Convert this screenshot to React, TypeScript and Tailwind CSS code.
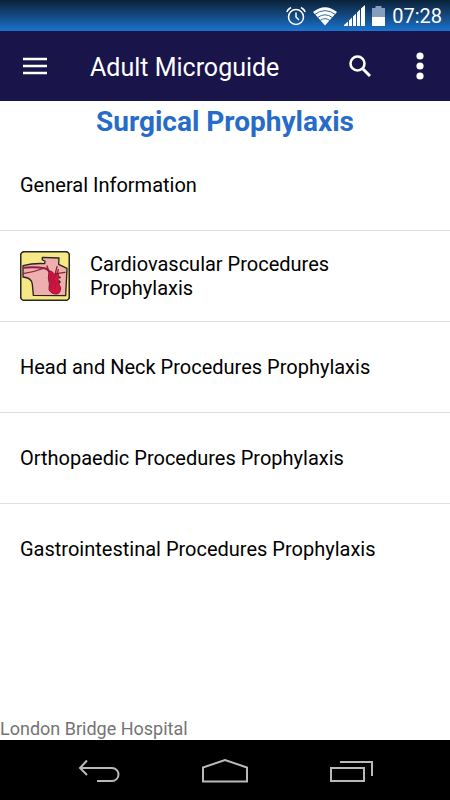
import type { ReactNode } from "react";

interface Procedure {
  id: string;
  title: string;
  icon?: ReactNode;
}

function HeartIcon() {
  return (
    <svg viewBox="30 28 150 150" className="h-[50px] w-[50px] shrink-0" aria-hidden="true">
      <rect x="32" y="30" width="146" height="146" rx="11" fill="#f6e884" stroke="#2b2723" strokeWidth="5" />
      <path
        d="M39 72 Q70 64 104 66 L105 58 L97 55 L97 47 L147 49 L146 68 L171 80 L167 162 L70 161 L67 128 Q65 108 39 106 Z"
        fill="#eeb0ac"
        stroke="#2b2424"
        strokeWidth="4"
        strokeLinejoin="round"
      />
      <path d="M39 78 Q76 74 104 80 Q115 83 123 97" fill="none" stroke="#8f1f45" strokeWidth="6" />
      <path d="M39 96 Q72 91 104 79" fill="none" stroke="#8f1f45" strokeWidth="4" />
      <path
        d="M111 73 L116 88 M141 75 L136 95 M165 92 L144 95 M145 84 L141 96"
        fill="none"
        stroke="#8f1f3d"
        strokeWidth="4"
        strokeLinecap="round"
      />
      <path
        d="M117 88 Q126 87 133 97 L144 95 L147 106 L143 112 L150 119 L147 128 L152 138 Q151 155 141 157 Q124 158 117 144 L118 125 L115 110 Z"
        fill="#d4133f"
        stroke="#8c1538"
        strokeWidth="3"
        strokeLinejoin="round"
      />
      <path d="M126 94 L122 111 L128 126 L120 140 M137 99 L130 113 L139 124 L134 142" fill="none" stroke="#991a43" strokeWidth="3" />
      <path d="M147 107 L152 108 M147 119 L151 123" stroke="#37242a" strokeWidth="5" />
    </svg>
  );
}

const procedures: Procedure[] = [
  { id: "general", title: "General Information" },
  {
    id: "cardiovascular",
    title: "Cardiovascular Procedures Prophylaxis",
    icon: <HeartIcon />,
  },
  { id: "head-neck", title: "Head and Neck Procedures Prophylaxis" },
  { id: "orthopaedic", title: "Orthopaedic Procedures Prophylaxis" },
  { id: "gastrointestinal", title: "Gastrointestinal Procedures Prophylaxis" },
];

function StatusBar() {
  return (
    <div className="flex h-[31px] items-center justify-end gap-[7px] bg-linear-to-b from-[#0b2239] to-[#1a73cf] pr-2 text-white">
      <svg viewBox="0 0 20 20" className="h-5 w-5" fill="none" stroke="currentColor" strokeWidth="1.5" aria-hidden="true">
        <circle cx="10" cy="11" r="7.5" />
        <path d="M10 6.5 V11 L13 14" />
        <path d="M0.8 6 Q2 3 5 1.5 M19.2 6 Q18 3 15 1.5" />
      </svg>
      <svg viewBox="0 0 24 20" className="h-5 w-6" aria-hidden="true">
        <path d="M0 6 Q12 -3.5 24 6 L12 19.5 Z" fill="currentColor" />
        <path
          d="M1.5 8.6 Q12 0.6 22.5 8.6 M4.5 11.6 Q12 6 19.5 11.6 M7.2 14.4 Q12 11 16.8 14.4"
          fill="none"
          stroke="#165899"
          strokeWidth="0.9"
        />
      </svg>
      <svg viewBox="0 0 21 21" className="h-[21px] w-[21px]" fill="currentColor" aria-hidden="true">
        <path d="M0 21 V20 L4 16.5 V21 Z M5 21 V15.5 L8 12.5 V21 Z M9 21 V11.5 L12 8.5 V21 Z M13 21 V7.5 L16 4.5 V21 Z M17 21 V3.5 L21 0 V21 Z" />
      </svg>
      <svg viewBox="0 0 13 20" className="h-5 w-[13px]" aria-hidden="true">
        <path d="M3.5 0 H9.5 V2 H13 V11 H0 V2 H3.5 Z" fill="#839fbd" />
        <path d="M0 11 H13 V20 H0 Z" fill="currentColor" />
      </svg>
      <time className="text-xl leading-6">07:28</time>
    </div>
  );
}

function AppBar() {
  return (
    <header className="flex h-[70px] items-center bg-[#19144a] pr-2.5 pl-5 text-white">
      <button type="button" aria-label="Open menu" className="flex h-10 w-[30px] items-center justify-center">
        <svg viewBox="0 0 24 18" className="h-[18px] w-6" stroke="currentColor" strokeWidth="2.4" aria-hidden="true">
          <path d="M0 2 H24 M0 9 H24 M0 16 H24" />
        </svg>
      </button>
      <h1 className="ml-10 flex-1 pt-1 text-[25px] leading-8">Adult Microguide</h1>
      <button type="button" aria-label="Search" className="flex h-10 w-10 items-center justify-center">
        <svg viewBox="0 0 24 24" className="h-6 w-6" fill="none" stroke="currentColor" aria-hidden="true">
          <circle cx="9.5" cy="9.5" r="7" strokeWidth="2.6" />
          <path d="M14.5 14.5 L22 22" strokeWidth="3" />
        </svg>
      </button>
      <button type="button" aria-label="More options" className="ml-5 flex h-10 w-10 items-center justify-center">
        <svg viewBox="0 0 8 28" className="h-7 w-2" fill="currentColor" aria-hidden="true">
          <circle cx="4" cy="4" r="3.6" />
          <circle cx="4" cy="14" r="3.6" />
          <circle cx="4" cy="24" r="3.6" />
        </svg>
      </button>
    </header>
  );
}

function NavigationBar() {
  return (
    <nav aria-label="System" className="flex h-[60px] items-center justify-around bg-black px-9 pt-0.5 text-[#b9b9b9]">
      <button type="button" aria-label="Back" className="flex h-10 w-12 items-center justify-center">
        <svg viewBox="0 0 42 24" className="h-6 w-[42px]" fill="none" stroke="currentColor" strokeWidth="2" aria-hidden="true">
          <path d="M9 1.5 L2 9 L9 16 M2 9 H34 A6.5 6.5 0 0 1 34 22 H19" />
        </svg>
      </button>
      <button type="button" aria-label="Home" className="flex h-10 w-12 items-center justify-center">
        <svg viewBox="0 0 46 24" className="h-6 w-[46px]" fill="none" stroke="currentColor" strokeWidth="2" aria-hidden="true">
          <path d="M1 22.5 V8.5 L23 1 L45 8.5 V22.5 Z" />
        </svg>
      </button>
      <button type="button" aria-label="Recent apps" className="flex h-10 w-12 items-center justify-center">
        <svg viewBox="0 0 43 22" className="h-[22px] w-[43px]" fill="none" stroke="currentColor" strokeWidth="2" aria-hidden="true">
          <path d="M1 8 H34 V21 H1 Z M10 2 H42 V16" />
        </svg>
      </button>
    </nav>
  );
}

export default function App() {
  return (
    <div className="flex min-h-screen flex-col bg-white font-[Roboto,sans-serif]">
      <StatusBar />
      <AppBar />

      <main className="flex-1">
        <h2 className="pt-[5px] pb-0.5 text-center text-[28px] leading-8 font-bold text-[#266cc8]">
          Surgical Prophylaxis
        </h2>
        <ul>
          {procedures.map((item) => (
            <li key={item.id} className="border-b border-[#dedede] last:border-b-0">
              <a href={`#${item.id}`} className="flex min-h-[90px] items-center gap-5 px-5 text-xl leading-6 text-black">
                {item.icon}
                <span>{item.title}</span>
              </a>
            </li>
          ))}
        </ul>
      </main>

      <footer className="text-lg leading-[22px] text-[#747474]">London Bridge Hospital</footer>
      <NavigationBar />
    </div>
  );
}
